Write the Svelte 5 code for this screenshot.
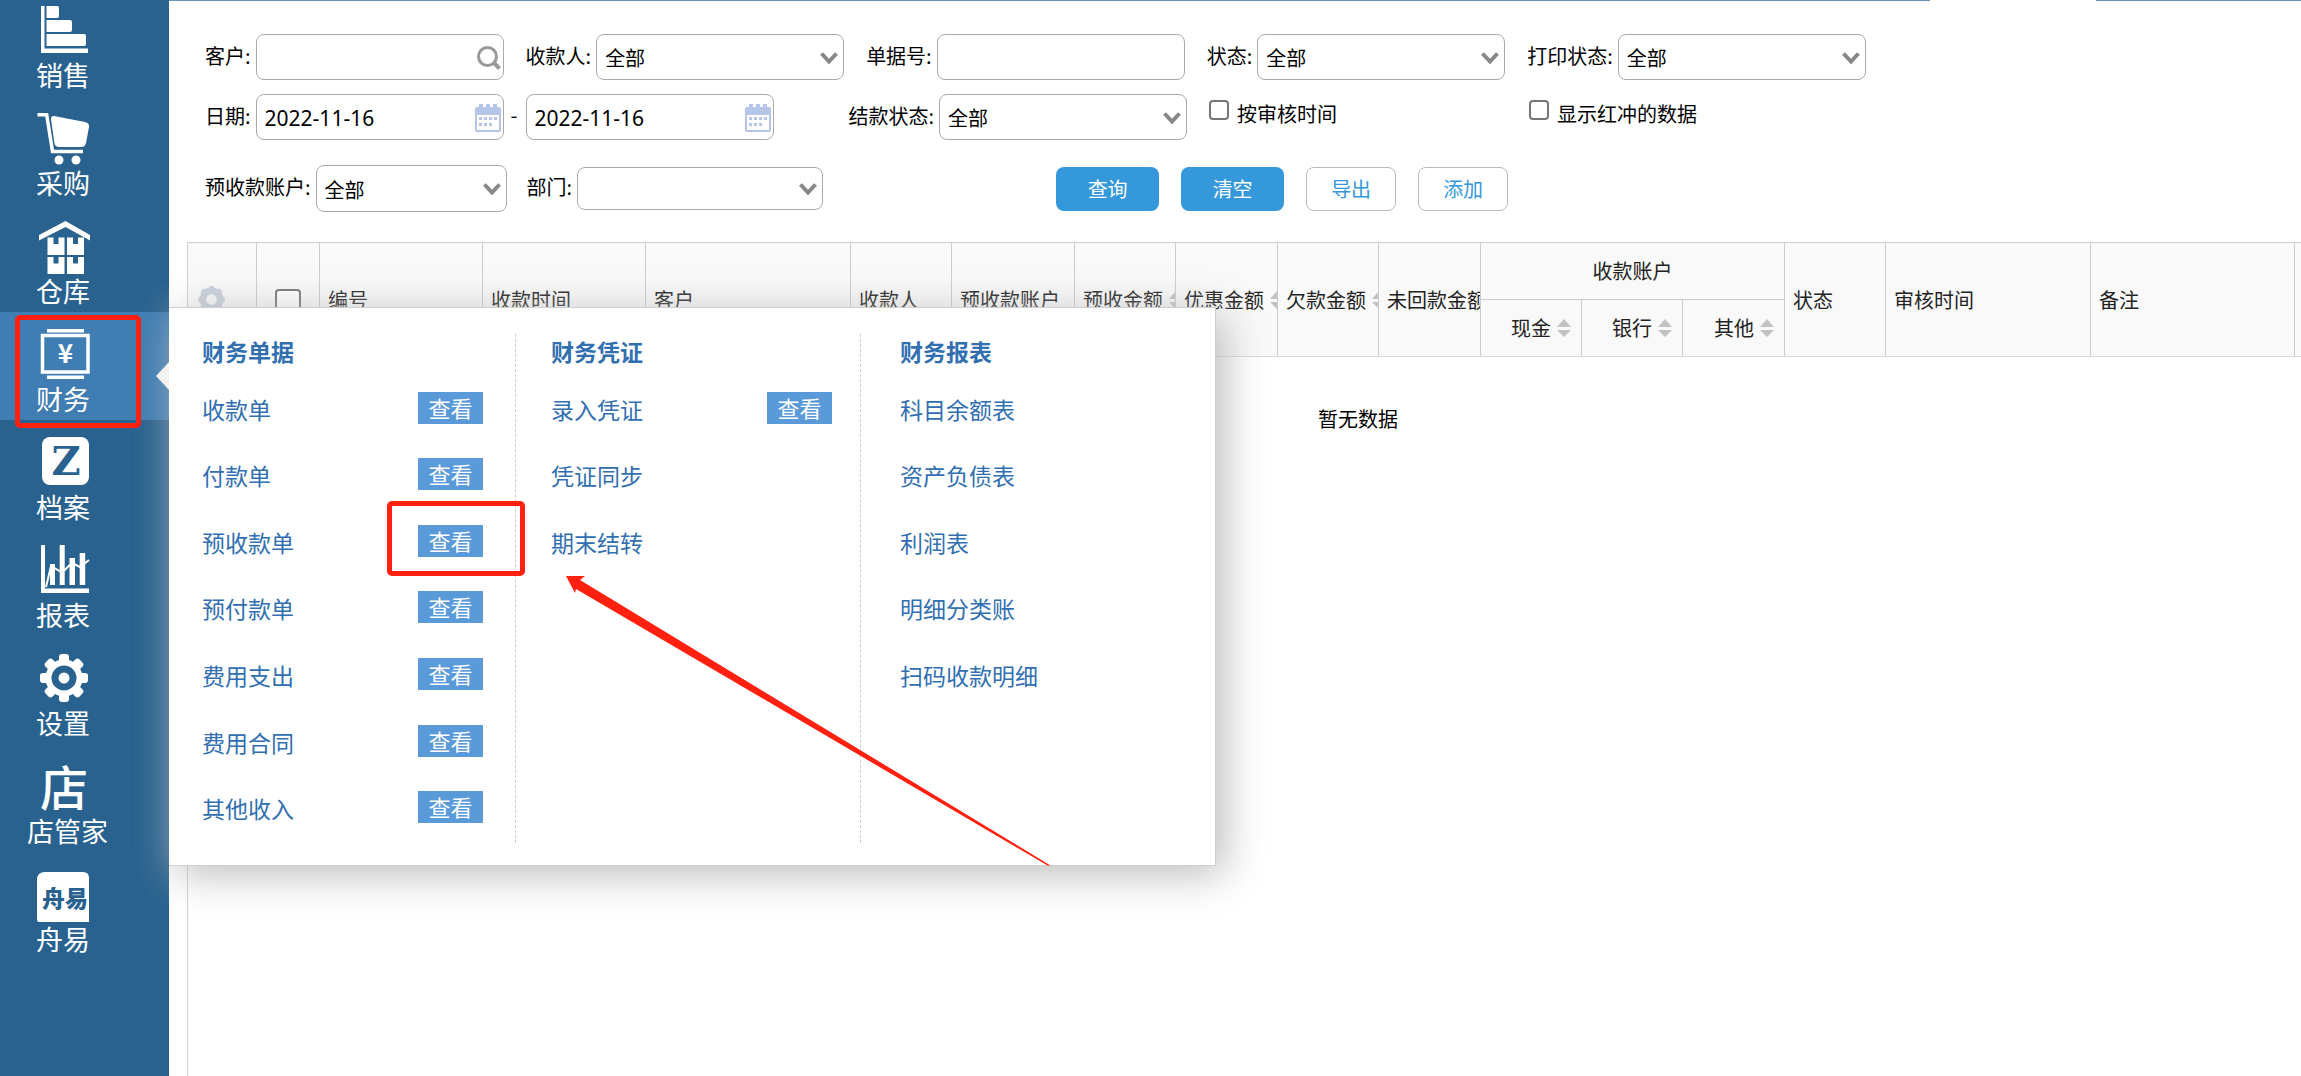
<script lang="ts">
	type Action = { name: string; view?: boolean };

	/** Sidebar entries */
	const modules = ['销售', '采购', '仓库', '财务', '档案', '报表', '设置', '店管家', '舟易'];

	/** Open entry */
	let active = $state('财务');

	/** Columns of the open menu */
	const menu: { title: string; items: Action[] }[] = [
		{
			title: '财务单据',
			items: [
				{ name: '收款单', view: true },
				{ name: '付款单', view: true },
				{ name: '预收款单', view: true },
				{ name: '预付款单', view: true },
				{ name: '费用支出', view: true },
				{ name: '费用合同', view: true },
				{ name: '其他收入', view: true }
			]
		},
		{
			title: '财务凭证',
			items: [{ name: '录入凭证', view: true }, { name: '凭证同步' }, { name: '期末结转' }]
		},
		{
			title: '财务报表',
			items: [
				{ name: '科目余额表' },
				{ name: '资产负债表' },
				{ name: '利润表' },
				{ name: '明细分类账' },
				{ name: '扫码收款明细' }
			]
		}
	];

	const colWidths = [69, 63, 163, 163, 205, 101, 123, 101, 102, 101, 102, 101, 101, 102, 101, 205, 204, 233];

	const columns = [
		{ name: '编号' },
		{ name: '收款时间' },
		{ name: '客户' },
		{ name: '收款人' },
		{ name: '预收款账户' },
		{ name: '预收金额', sort: true },
		{ name: '优惠金额', sort: true },
		{ name: '欠款金额', sort: true },
		{ name: '未回款金额', sort: true }
	];

	const accounts = ['现金', '银行', '其他'];
	const teeth = [0, 45, 90, 135, 180, 225, 270, 315];

	let dateFrom = $state('2022-11-16');
	let dateTo = $state('2022-11-16');
</script>

{#snippet dropdown(id: string, label: string, value: string, size: string)}
	<div class="field">
		<label for={id}>{label}:</label>
		<div class="control {size}">
			<select {id}>
				<option>{value}</option>
			</select>
			<svg class="chevron" viewBox="0 0 18 12" aria-hidden="true">
				<path d="M1.5 1.5 9 9.5l7.500-8" />
			</svg>
		</div>
	</div>
{/snippet}

{#snippet calendar()}
	<svg class="calendar" viewBox="0 0 26 28" aria-hidden="true">
		<path class="fill" d="M2 3h22a2 2 0 0 1 2 2v21a2 2 0 0 1-2 2H2a2 2 0 0 1-2-2V5a2 2 0 0 1 2-2Z" />
		<path class="paper" d="M2 11h22v15H2z" />
		<path class="fill" d="M4 0h4v6H4zM11 0h4v6h-4zM18 0h4v6h-4z" />
		<path class="days" d="M4 14.500h19M4 20.500h14" />
	</svg>
{/snippet}

{#snippet sorter()}
	<svg class="sorter" viewBox="0 0 16 20" aria-hidden="true">
		<path d="M8 1l7 8H1zM8 19l7-7H1z" />
	</svg>
{/snippet}

{#snippet cog(cls: string)}
	<svg class={cls} viewBox="0 0 54 54" aria-hidden="true">
		<circle class="ring" cx="28" cy="26" r="15.500" />
		{#each teeth as angle}
			<path d="M23 10V5q0-3 3-3h4q3 0 3 3v5z" transform="rotate({angle} 28 26)" />
		{/each}
		{#if cls === 'icon'}
			<circle cx="28" cy="26" r="5.500" />
		{/if}
	</svg>
{/snippet}

<div class="app">
	<aside class="sidebar">
		<nav>
			{#each modules as name}
				<button class="module" class:active={name === active} class:wide={name.length > 2} onclick={() => (active = name)}>
					{#if name === '设置'}
						{@render cog('icon')}
					{:else}
						<svg class="icon" viewBox="0 0 54 54" aria-hidden="true">
							{#if name === '销售'}
								<path d="M5 2h3.500v42.500H52V49H5z" />
								<path d="M10.500 2H21q2 0 2 2v8q0 2-2 2H10.500zM10.500 16H34q2 0 2 2v8q0 2-2 2H10.500zM10.500 30H48q2 0 2 2v8q0 2-2 2H10.500z" />
							{:else if name === '采购'}
								<path class="line" d="M1.500 2.800h9.200L16.500 39.500H47" />
								<path d="M18 4l31 6q4.500 1 4 5l-3 16q-.6 4-5 4H23q-4 0-4.600-4L15 7q-.2-3 3-3Z" />
								<circle cx="23" cy="48" r="4.500" />
								<circle cx="40" cy="48" r="4.500" />
							{:else if name === '仓库'}
								<path d="M29.500 1 54 15v5.500L29.500 7 3 20.500V15z" />
								<path d="M11.500 17.500h6V24h5v-6.500h6V35h-17zM31 17.500h6V24h5v-6.500h6V35H31zM11.500 37h6v6.500h5V37h6v17h-17zM31 37h6v6.500h5V37h6v17H31z" />
							{:else if name === '财务'}
								<path d="M11 1h37v3.500H11zM11 47.500h37V51H11z" />
								<path class="line" d="M6.500 7.500H52v36.500H6.500z" />
								<text x="29.500" y="35" font-size="26" font-weight="700">¥</text>
							{:else if name === '档案'}
								<rect x="6" y="1" width="47" height="48" rx="8" />
								<text class="cut serif" x="30" y="39" font-size="40">Z</text>
							{:else if name === '报表'}
								<path d="M5 1h4v43.500h44V49H5z" />
								<path d="M14 20h5v21h-5zM23.700 1h5v40h-5zM33.500 14H39v27h-5.500zM43.700 9h5.500v32h-5.500z" />
								<path class="line thin" d="M10 43l5-21 11 6.500L36 19l8 4 9-7" />
							{:else if name === '店管家'}
								<text x="28" y="46" font-size="48" font-weight="500">店</text>
							{:else}
								<path d="M9 4h38q6 0 6 6v44H3q-2 0-2-3V12q0-8 8-8Z" />
								<text class="cut" x="29" y="39" font-size="23" font-weight="900">舟易</text>
							{/if}
						</svg>
					{/if}
					<span>{name}</span>
				</button>
			{/each}
		</nav>

		<div class="flyout">
			{#each menu as column}
				<section>
					<h2>{column.title}</h2>
					<ul>
						{#each column.items as item}
							<li>
								<a href="#{item.name}">{item.name}</a>
								{#if item.view}
									<button class="view">查看</button>
								{/if}
							</li>
						{/each}
					</ul>
				</section>
			{/each}
		</div>

		<!-- tutorial marks -->
		<div class="mark mark-module"></div>
		<div class="mark mark-view"></div>
		<svg class="pointer" viewBox="0 0 484 290" aria-hidden="true">
			<path d="M0 0h19l-5 4L484.500 289.500h-3L10 13l-1 4z" />
		</svg>
	</aside>

	<main>
		<div class="topline"><i></i><i></i></div>

		<form class="filters" onsubmit={(e) => e.preventDefault()}>
			<div class="row">
				<div class="field">
					<label for="customer">客户:</label>
					<div class="control">
						<input id="customer" type="text" />
						<svg class="search" viewBox="0 0 24 24" aria-hidden="true">
							<circle cx="10.500" cy="10.500" r="9" />
							<path d="M17 17l5.500 5.500" />
						</svg>
					</div>
				</div>
				{@render dropdown('payee', '收款人', '全部', '')}
				<div class="field">
					<label for="number">单据号:</label>
					<div class="control"><input id="number" type="text" /></div>
				</div>
				{@render dropdown('state', '状态', '全部', '')}
				{@render dropdown('print', '打印状态', '全部', '')}
			</div>

			<div class="row">
				<div class="field dates">
					<label for="from">日期:</label>
					<div class="control">
						<input id="from" type="text" bind:value={dateFrom} />
						{@render calendar()}
					</div>
					<label class="dash" for="to">-</label>
					<div class="control">
						<input id="to" type="text" bind:value={dateTo} />
						{@render calendar()}
					</div>
				</div>
				{@render dropdown('settle', '结款状态', '全部', '')}
				<label class="check"><input type="checkbox" />按审核时间</label>
				<label class="check"><input type="checkbox" />显示红冲的数据</label>
			</div>

			<div class="row last">
				{@render dropdown('account', '预收款账户', '全部', 'narrow')}
				{@render dropdown('dept', '部门', '', 'low')}
				<div class="actions">
					<button class="primary">查询</button>
					<button class="primary">清空</button>
					<button class="plain">导出</button>
					<button class="plain">添加</button>
				</div>
			</div>
		</form>

		<div class="grid">
			<table>
				<colgroup>
					{#each colWidths as width}
						<col style="width: {width}px" />
					{/each}
				</colgroup>
				<thead>
					<tr>
						<th rowspan="2">{@render cog('cog')}</th>
						<th rowspan="2" class="center"><input type="checkbox" aria-label="全选" /></th>
						{#each columns as column}
							<th rowspan="2">
								<span class="cell">{column.name}{#if column.sort}{@render sorter()}{/if}</span>
							</th>
						{/each}
						<th colspan="3" class="center group">收款账户</th>
						<th rowspan="2">状态</th>
						<th rowspan="2">审核时间</th>
						<th rowspan="2">备注</th>
						<th rowspan="2"></th>
					</tr>
					<tr>
						{#each accounts as account}
							<th><span class="cell end">{account}{@render sorter()}</span></th>
						{/each}
					</tr>
				</thead>
				<tbody>
					<tr>
						<td colspan="18">暂无数据</td>
					</tr>
				</tbody>
			</table>
		</div>
	</main>
</div>

<style>
	:global(body) {
		margin: 0;
		background: #fff;
	}

	.app {
		display: flex;
		min-height: 100vh;
		color: #000;
		font: 400 20px/30px 'Noto Sans CJK SC', sans-serif;
	}

	.app * {
		box-sizing: border-box;
	}

	button,
	input,
	select {
		font: inherit;
	}

	button {
		padding: 0;
		border: 0;
		cursor: pointer;
	}

	/* sidebar */
	.sidebar {
		position: relative;
		z-index: 1;
		flex: 0 0 169px;
		background: #29628f;
	}

	nav {
		margin-top: -12px;
	}

	.module {
		display: flex;
		flex-direction: column;
		align-items: flex-start;
		width: 100%;
		height: 108px;
		padding: 16px 0 0 36px;
		background: none;
		color: #fff;
		font-size: 27px;
		line-height: 34px;
	}

	.module.active {
		background: #3f7db2;
	}

	.module.wide span {
		margin-left: -9px;
	}

	.icon {
		flex: none;
		width: 54px;
		height: 54px;
		fill: #fff;
		overflow: visible;
	}

	.icon .line {
		fill: none;
		stroke: #fff;
		stroke-width: 3.5;
	}

	.icon .thin {
		stroke-width: 2;
	}

	.icon text {
		text-anchor: middle;
	}

	.icon .cut {
		fill: #29628f;
	}

	.icon .serif {
		font-family: 'DejaVu Serif', serif;
		font-weight: 700;
	}

	.ring {
		fill: none;
		stroke: #fff;
		stroke-width: 6;
	}

	/* flyout menu */
	.flyout {
		position: absolute;
		top: 307px;
		left: 100%;
		display: grid;
		grid-template-columns: 347px 345px 354px;
		padding: 26px 0 22px;
		border: 1px solid #d0d0d0;
		border-left: 0;
		background: #fff;
		box-shadow: 8px 8px 40px #bbb;
	}

	.flyout::before {
		content: '';
		position: absolute;
		top: 54px;
		left: -13px;
		border: 14px solid transparent;
		border-left: 0;
		border-right: 13px solid #f2f2f2;
	}

	section {
		padding: 0 32px 0 33px;
		border-right: 1px dashed #ccc;
	}

	section:nth-child(2) {
		padding: 0 28px 0 35px;
	}

	section:nth-child(3) {
		padding-left: 39px;
		border: 0;
	}

	h2 {
		margin: 0 0 9px;
		color: #316fb0;
		font-size: 23px;
		font-weight: 700;
		line-height: 34px;
	}

	ul {
		display: grid;
		grid-template-rows: repeat(7, 1fr);
		min-height: 466px;
		margin: 0;
		padding: 0;
		list-style: none;
	}

	li {
		display: flex;
		align-items: center;
		justify-content: space-between;
	}

	li a {
		padding-bottom: 3px;
		color: #316fb0;
		font-size: 23px;
		text-decoration: none;
	}

	.view {
		width: 65px;
		height: 32px;
		margin-bottom: 5px;
		padding-bottom: 2px;
		background: #5a9ad9;
		color: #fff;
		font-size: 22px;
		line-height: 30px;
	}

	/* marks over the page */
	.mark {
		position: absolute;
		border: 5px solid #ff2010;
		border-radius: 5px;
		pointer-events: none;
	}

	.mark-module {
		top: 315px;
		left: 15px;
		width: 126px;
		height: 113px;
	}

	.mark-view {
		top: 501px;
		left: 387px;
		width: 138px;
		height: 75px;
	}

	.pointer {
		position: absolute;
		top: 576px;
		left: 566px;
		width: 484px;
		height: 290px;
		fill: #ff2010;
		pointer-events: none;
	}

	/* page */
	main {
		display: flex;
		flex: 1;
		flex-direction: column;
		min-width: 0;
	}

	.topline {
		display: flex;
		justify-content: space-between;
	}

	.topline i {
		flex: 0 0 205px;
		height: 1px;
		background: #6b91b5;
	}

	.topline i:first-child {
		flex: 1;
		margin-right: 166px;
	}

	.filters {
		padding: 33px 0 30px 36px;
	}

	.row {
		display: flex;
		align-items: center;
		gap: 22px;
		margin-bottom: 14px;
	}

	.row:nth-child(2) {
		margin-bottom: 25px;
	}

	.row.last {
		gap: 20px;
		margin: 0;
	}

	.field {
		display: flex;
		align-items: center;
		gap: 5px;
	}

	.field label {
		padding-bottom: 3px;
	}

	.dates {
		margin-right: 53px;
	}

	.field .dash {
		padding: 0 3px 4px 2px;
	}

	.control {
		position: relative;
		width: 248px;
		height: 46px;
	}

	.control.narrow {
		width: 191px;
		height: 47px;
	}

	.control.low {
		width: 246px;
		height: 43px;
	}

	.control input,
	.control select {
		display: block;
		width: 100%;
		height: 100%;
		padding: 2px 8px 0;
		border: 1px solid #a9a9a9;
		border-radius: 8px;
		background: #fff;
		color: #000;
		appearance: none;
	}

	.control input {
		font-family: 'Noto Sans', 'Noto Sans CJK SC', sans-serif;
		font-size: 21px;
	}

	.control svg {
		position: absolute;
		fill: none;
		pointer-events: none;
	}

	.chevron {
		top: 18px;
		right: 6px;
		width: 18px;
		height: 12px;
		stroke: #888;
		stroke-width: 4;
	}

	.low .chevron {
		top: 16px;
	}

	.search {
		top: 12px;
		right: 3px;
		width: 24px;
		height: 24px;
		stroke: #999;
		stroke-width: 3;
	}

	.search path {
		stroke-width: 4;
	}

	.calendar {
		top: 10px;
		right: 3px;
		width: 26px;
		height: 28px;
	}

	.calendar .fill {
		fill: #b4c5e8;
	}

	.calendar .paper {
		fill: #fff;
	}

	.calendar .days {
		stroke: #b4c5e8;
		stroke-width: 3;
		stroke-dasharray: 3 2;
	}

	.check {
		display: flex;
		align-items: center;
		gap: 8px;
		min-width: 298px;
		padding-bottom: 6px;
	}

	.check input,
	th input {
		width: 20px;
		height: 20px;
		margin: 0 0 8px;
		border: 2px solid #767676;
		border-radius: 4px;
		background: #fff;
		appearance: none;
	}

	.actions {
		display: flex;
		gap: 22px;
		margin-left: 213px;
	}

	.actions button {
		height: 44px;
		border-radius: 8px;
	}

	.primary {
		width: 103px;
		background: #3498db;
		color: #fff;
	}

	.plain {
		width: 90px;
		border: 1px solid #bbb;
		background: #fff;
		color: #3498db;
	}

	/* data grid */
	.grid {
		flex: 1;
		margin-left: 18px;
		border: 1px solid #d0d0d0;
		border-width: 1px 0 0 1px;
		overflow: hidden;
	}

	table {
		width: 2340px;
		border-collapse: separate;
		border-spacing: 0;
		table-layout: fixed;
	}

	thead {
		color: #222;
	}

	th {
		height: 57px;
		padding: 0 0 0 8px;
		border-right: 1px solid #ccc;
		background: #f9f9f9;
		font-weight: 400;
		text-align: left;
		overflow: hidden;
	}

	thead th[rowspan],
	thead tr:last-child th {
		border-bottom: 1px solid #d8d8d8;
	}

	th.center {
		padding: 0;
		text-align: center;
	}

	th.group {
		border-bottom: 1px solid #ccc;
	}

	th input {
		width: 26px;
		height: 26px;
		margin: 0;
		vertical-align: middle;
	}

	.cell {
		display: flex;
		align-items: center;
		gap: 5px;
		overflow: hidden;
		white-space: nowrap;
	}

	.cell.end {
		justify-content: flex-end;
		padding-right: 9px;
	}

	.sorter {
		flex: none;
		width: 16px;
		height: 20px;
		fill: #c2c2c2;
	}

	.cog {
		display: block;
		width: 30px;
		height: 30px;
		fill: #c9d0da;
	}

	.cog .ring {
		stroke: #c9d0da;
		stroke-width: 12;
	}

	td {
		height: 124px;
		padding: 0;
		text-align: center;
	}
</style>
